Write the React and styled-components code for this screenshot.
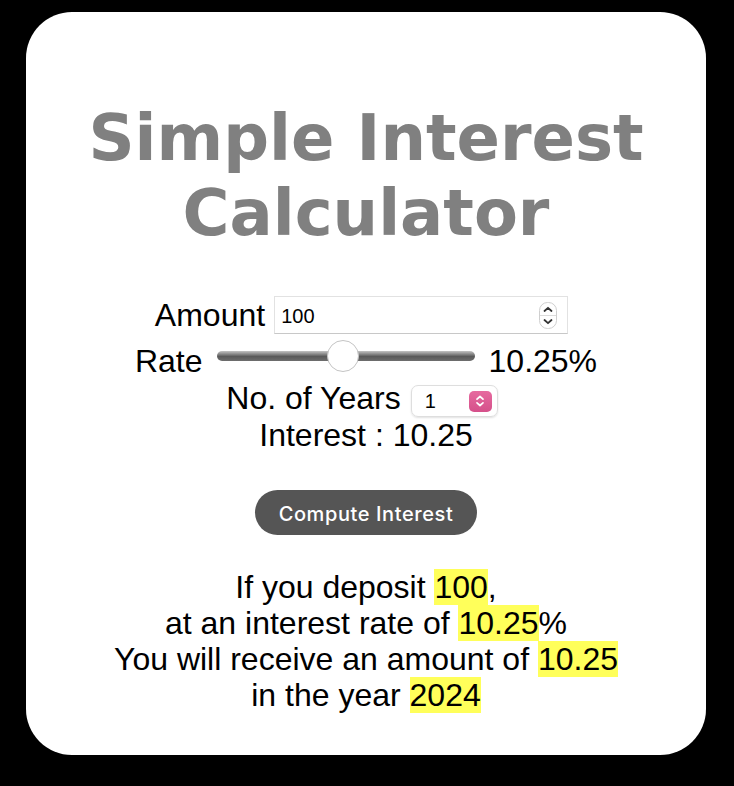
import React from "react";
import styled, { createGlobalStyle } from "styled-components";

const GlobalStyle = createGlobalStyle`
  html, body {
    margin: 0;
    background: #000;
  }
  body {
    font-family: "Liberation Sans", Arial, sans-serif;
  }
`;

const App = () => {
  const amount = 100;
  const rate = 10.25;
  const years = 1;
  const interest = (amount * rate * years) / 100;

  return (
    <Page>
      <GlobalStyle />
      <Card>
        <Title>
          Simple Interest
          <br />
          Calculator
        </Title>

        <AmountRow>
          <Label>Amount</Label>
          <NumberBox>
            <NumberInput type="text" defaultValue={amount} />
            <Spinner width="18" height="27" viewBox="0 0 18 27">
              <rect x="0.5" y="0.5" width="17" height="26" rx="8" fill="#fff" stroke="#cfcfcf" />
              <line x1="1" y1="13.5" x2="17" y2="13.5" stroke="#dcdcdc" />
              <path d="M5.5 9 L9 5.8 L12.5 9" fill="none" stroke="#333" strokeWidth="1.8" strokeLinecap="round" strokeLinejoin="round" />
              <path d="M5.5 18 L9 21.2 L12.5 18" fill="none" stroke="#333" strokeWidth="1.8" strokeLinecap="round" strokeLinejoin="round" />
            </Spinner>
          </NumberBox>
        </AmountRow>

        <RateRow>
          <Label $top={4}>Rate</Label>
          <Slider type="range" min="1" max="20" step="0.25" defaultValue={rate} />
          <Label $top={4}>{rate}%</Label>
        </RateRow>

        <YearsRow>
          <Label>No. of Years</Label>
          <SelectBox>
            <SelectValue>{years}</SelectValue>
            <SelectKnob>
              <svg width="12" height="14" viewBox="0 0 12 14">
                <path d="M3 5.2 L6 2.5 L9 5.2" fill="none" stroke="#fff" strokeWidth="1.7" strokeLinecap="round" strokeLinejoin="round" />
                <path d="M3 8.8 L6 11.5 L9 8.8" fill="none" stroke="#fff" strokeWidth="1.7" strokeLinecap="round" strokeLinejoin="round" />
              </svg>
            </SelectKnob>
          </SelectBox>
        </YearsRow>

        <Result>Interest : {interest}</Result>

        <Button>Compute Interest</Button>

        <Summary>
          If you deposit <Mark>{amount}</Mark>,
          <br />
          at an interest rate of <Mark>{rate}</Mark>%
          <br />
          You will receive an amount of <Mark>{interest}</Mark>
          <br />
          in the year <Mark>2024</Mark>
        </Summary>
      </Card>
    </Page>
  );
};

export default App;

const Page = styled.div`
  padding: 12px 0 31px 26px;
  display: flex;
`;

const Card = styled.div`
  width: 680px;
  height: 743px;
  box-sizing: border-box;
  background: #fff;
  border-radius: 46px;
  padding-top: 89px;
  display: flex;
  flex-direction: column;
  align-items: center;
`;

const Title = styled.h1`
  margin: 0 0 45px;
  font-family: "DejaVu Sans", Verdana, sans-serif;
  font-weight: bold;
  font-size: 64px;
  line-height: 75px;
  color: #808080;
  text-align: center;
`;

const Label = styled.span`
  font-size: 32px;
  line-height: 37px;
  color: #000;
  margin-top: ${(p) => p.$top || 0}px;
`;

const AmountRow = styled.div`
  display: flex;
  align-items: center;
  gap: 9px;
  margin-right: 9px;
  height: 38px;
`;

const NumberBox = styled.div`
  width: 294px;
  height: 38px;
  box-sizing: border-box;
  border: 1px solid #e2e2e2;
  border-bottom-color: #c8c8c8;
  display: flex;
  align-items: center;
  padding: 0 10px 0 6px;
`;

const NumberInput = styled.input`
  flex: 1;
  min-width: 0;
  border: none;
  outline: none;
  padding: 0;
  margin-top: 3px;
  font-family: "Liberation Sans", Arial, sans-serif;
  font-size: 20px;
  color: #000;
  background: transparent;
`;

const Spinner = styled.svg`
  display: block;
`;

const RateRow = styled.div`
  display: flex;
  align-items: flex-start;
  gap: 14px;
  margin-top: 5px;
`;

const Slider = styled.input`
  -webkit-appearance: none;
  appearance: none;
  width: 258px;
  height: 33px;
  margin: 0;
  background: transparent;

  &::-webkit-slider-runnable-track {
    height: 10px;
    border-radius: 5px;
    background: linear-gradient(#c4c4c4, #5a5a5a 55%, #6e6e6e);
  }

  &::-webkit-slider-thumb {
    -webkit-appearance: none;
    width: 32px;
    height: 32px;
    margin-top: -11px;
    border-radius: 50%;
    background: #fff;
    border: 1px solid #c4c4c4;
    box-sizing: border-box;
  }
`;

const YearsRow = styled.div`
  display: flex;
  align-items: flex-start;
  gap: 10px;
  margin-right: 8px;
`;

const SelectBox = styled.div`
  margin-top: 5px;
  width: 87px;
  height: 32px;
  box-sizing: border-box;
  border: 1px solid #dedede;
  border-radius: 7px;
  box-shadow: 0 1px 2px rgba(0, 0, 0, 0.12);
  display: flex;
  align-items: center;
  justify-content: space-between;
  padding: 0 5px 0 13px;
`;

const SelectValue = styled.span`
  font-size: 20px;
  color: #000;
`;

const SelectKnob = styled.div`
  width: 23px;
  height: 21px;
  border-radius: 5px;
  background: linear-gradient(#e66a9f, #d5508a);
  display: flex;
  align-items: center;
  justify-content: center;
`;

const Result = styled.div`
  font-size: 32px;
  line-height: 37px;
  color: #000;
`;

const Button = styled.button`
  margin-top: 36px;
  width: 222px;
  height: 45px;
  border: none;
  border-radius: 23px;
  background: #555;
  color: #fff;
  font-family: Inter, "Liberation Sans", sans-serif;
  font-weight: 500;
  font-size: 20px;
  letter-spacing: 0.6px;
  padding: 2px 0 0;
`;

const Summary = styled.p`
  margin: 34px 0 0;
  font-size: 32px;
  line-height: 36px;
  text-align: center;
  color: #000;
`;

const Mark = styled.span`
  background: #ffff5a;
`;
